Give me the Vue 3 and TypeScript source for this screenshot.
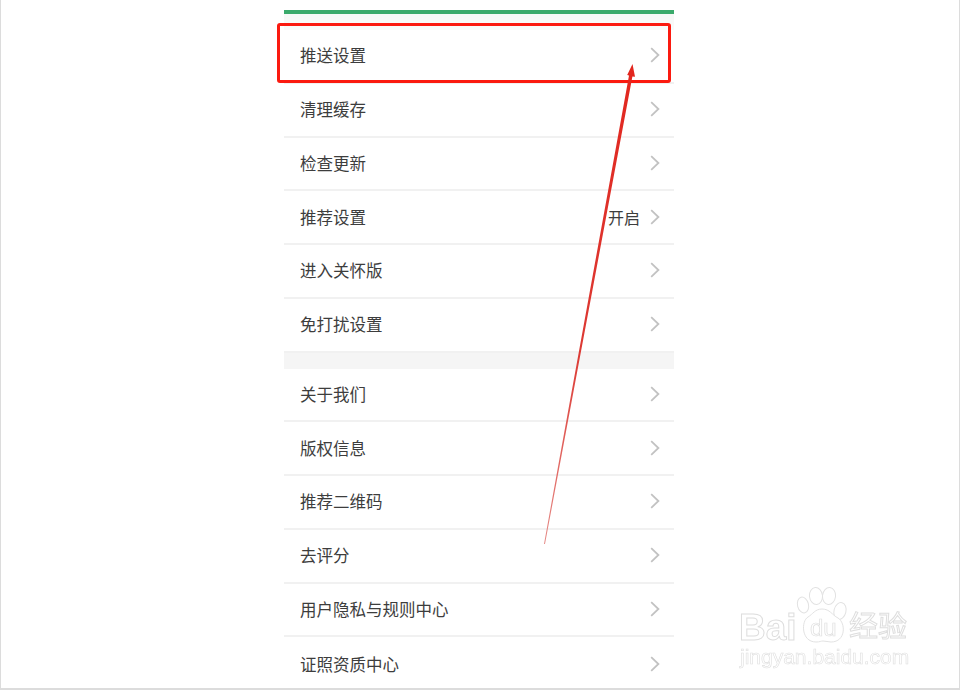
<script setup lang="ts">
// settings list screenshot, with the annotation and watermark drawn on top
const firstGroup = [
  { label: '推送设置' },
  { label: '清理缓存' },
  { label: '检查更新' },
  { label: '推荐设置', value: '开启' },
  { label: '进入关怀版' },
  { label: '免打扰设置' },
]
const secondGroup = [
  { label: '关于我们' },
  { label: '版权信息' },
  { label: '推荐二维码' },
  { label: '去评分' },
  { label: '用户隐私与规则中心' },
  { label: '证照资质中心' },
]
</script>

<template>
  <div class="frame">
    <div class="shot">
      <div class="phone">
        <div class="green-bar"></div>
        <div class="top-gap"></div>
        <ul class="group">
          <li v-for="item in firstGroup" :key="item.label" class="row">
            <span class="label">{{ item.label }}</span>
            <span v-if="item.value" class="value">{{ item.value }}</span>
            <svg class="chevron" width="10" height="16" viewBox="0 0 10 16">
              <path d="M1.2 1.2 8.4 8 1.2 14.8" />
            </svg>
          </li>
        </ul>
        <div class="band"></div>
        <ul class="group">
          <li v-for="item in secondGroup" :key="item.label" class="row">
            <span class="label">{{ item.label }}</span>
            <svg class="chevron" width="10" height="16" viewBox="0 0 10 16">
              <path d="M1.2 1.2 8.4 8 1.2 14.8" />
            </svg>
          </li>
        </ul>
      </div>

      <div class="red-box"></div>
      <svg class="arrow" width="110" height="490" viewBox="0 0 110 490">
        <defs>
          <linearGradient id="shaft" x1="0" y1="0" x2="0" y2="1">
            <stop offset="0" stop-color="#e2261e" />
            <stop offset="0.6" stop-color="#dc3a34" />
            <stop offset="1" stop-color="#e58a86" />
          </linearGradient>
        </defs>
        <path d="M88.5 0 83.2 11 85 11.4 0 480 1 480 88.4 12.4 91 12.8Z" fill="url(#shaft)" />
      </svg>

      <div class="watermark">
        <span class="wm-bai">Bai</span>
        <svg class="paw" width="56" height="62" viewBox="0 0 56 62">
          <g fill="#fff" stroke="#e2e2e2" stroke-width="1">
            <ellipse cx="7" cy="18" rx="5.5" ry="8" transform="rotate(-14 7 18)" />
            <ellipse cx="20" cy="9" rx="6.5" ry="8.5" transform="rotate(-6 20 9)" />
            <ellipse cx="33" cy="9" rx="6.5" ry="8.5" transform="rotate(6 33 9)" />
            <ellipse cx="44" cy="24" rx="6" ry="8.5" transform="rotate(14 44 24)" />
            <path d="M26 22C19 22 17 27 12 30 5 34 5 55 20 55 24 55 25 54 27 54 30 54 32 55 35 55 50 55 50 36 42 31 36 28 34 22 26 22Z" />
          </g>
        </svg>
        <span class="wm-du">du</span>
        <span class="wm-cn">经验</span>
        <span class="wm-url">jingyan.baidu.com</span>
      </div>
    </div>
  </div>
</template>

<style scoped>
.frame {
  box-sizing: border-box;
  width: 960px;
  height: 690px;
  overflow: hidden;
  background: #fff;
  border-left: 1px solid #dcdcdc;
  border-right: 1px solid #dcdcdc;
  border-bottom: 2px solid #dcdcdc;
  font-family: "Liberation Sans", "Noto Sans CJK SC", sans-serif;
}
/* the source is a rescaled photo, so everything is a little soft */
.shot {
  position: relative;
  height: 100%;
  filter: blur(0.35px);
}
.phone {
  width: 390px;
  margin-left: 283px;
  padding-top: 10px;
}
.green-bar {
  height: 4px;
  background: #3aaa6b;
}
.top-gap {
  height: 16px;
  background: linear-gradient(#f6f8f6, #fafafa);
}
.group {
  list-style: none;
  margin: 0;
  padding: 0;
}
.row {
  box-sizing: border-box;
  display: flex;
  align-items: center;
  height: 53.75px;
  padding: 0 14px 1px 16px;
  border-bottom: 2px solid #f1f1f1;
  background: #fff;
}
.group:last-of-type .row:last-child {
  border-bottom: none;
}
.label {
  flex: 1;
  font-size: 16.5px;
  color: #3d3d3d;
}
.value {
  margin-right: 10px;
  font-size: 16px;
  color: #3d3d3d;
}
.chevron {
  flex: none;
}
.chevron path {
  fill: none;
  stroke: #c2c2c2;
  stroke-width: 1.8;
}
.band {
  height: 16px;
  background: #f5f5f5;
}
.red-box {
  position: absolute;
  left: 276px;
  top: 23px;
  width: 394px;
  height: 60px;
  box-sizing: border-box;
  border: 3px solid #fb1a10;
  border-radius: 3px;
}
.arrow {
  position: absolute;
  left: 543px;
  top: 64px;
}
.watermark {
  position: absolute;
  left: 0;
  top: 0;
}
.wm-bai,
.wm-du,
.wm-cn,
.wm-url {
  position: absolute;
  white-space: nowrap;
  color: #fff;
  -webkit-text-stroke: 1px #dedede;
}
.wm-bai {
  left: 738px;
  top: 606px;
  font-size: 37px;
  font-weight: 700;
  line-height: 44px;
}
.paw {
  position: absolute;
  left: 795px;
  top: 587px;
}
.wm-du {
  left: 809px;
  top: 615px;
  font-size: 24px;
  line-height: 26px;
  -webkit-text-stroke-width: 0.7px;
}
.wm-cn {
  left: 848px;
  top: 610px;
  font-size: 29px;
  line-height: 34px;
}
.wm-url {
  left: 739px;
  top: 645px;
  font-size: 21px;
  line-height: 24px;
  -webkit-text-stroke-width: 0.6px;
}
</style>
